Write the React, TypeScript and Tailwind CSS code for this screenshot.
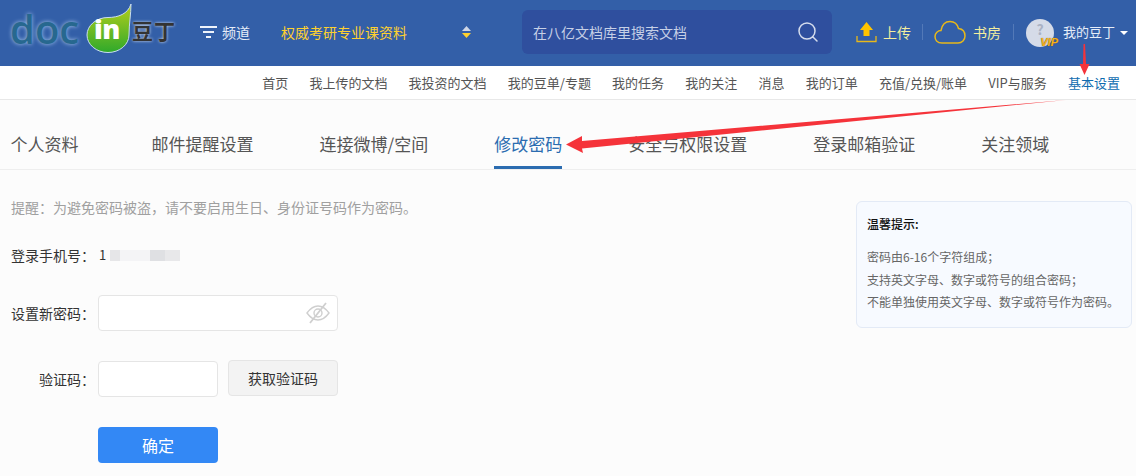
import React from 'react';
import { Search } from 'lucide-react';

const navItems = ['首页', '我上传的文档', '我投资的文档', '我的豆单/专题', '我的任务', '我的关注', '消息', '我的订单', '充值/兑换/账单', 'VIP与服务'];
const tabs = ['邮件提醒设置', '连接微博/空间', '修改密码', '安全与权限设置', '登录邮箱验证', '关注领域'];

const Logo = () => (
    <div className="relative ml-[10px] flex h-[66px] w-[170px] shrink-0 items-center">
        <span className="mt-[-6px] font-['Open_Sans',sans-serif] text-[40px] leading-none font-semibold text-[#27688f] [text-shadow:0_0_4px_#a8c8ec]">doc</span>
        {/* green drop */}
        <svg className="absolute top-[3px] left-[74px]" width="50" height="52" viewBox="0 0 50 52">
            <defs>
                <linearGradient id="drop" x1="0" y1="0" x2="0" y2="1">
                    <stop offset="0" stopColor="#b7cf1c" />
                    <stop offset="1" stopColor="#2fa92b" />
                </linearGradient>
            </defs>
            <path d="M47 2 C47 12 45 22 45 33 A21 17.500 0 1 1 24 15.500 C34 15.500 44 12 47 2 Z" fill="url(#drop)" stroke="#c9dcf2" strokeWidth="1" />
        </svg>
        <span className="absolute top-[13px] left-[84px] font-['Open_Sans',sans-serif] text-[27px] leading-[34px] font-extrabold tracking-[-0.5px] text-white">in</span>
        <span className="absolute top-[17px] left-[122px] font-['Noto_Sans_CJK_SC',sans-serif] text-[21px] leading-[28px] font-bold tracking-[1px] text-[#333] [text-shadow:0_0_3px_#dfe8f5]">豆丁</span>
    </div>
);

const Header = () => (
    <header className="flex h-[66px] items-center bg-[#335fa8] pb-[2px] text-sm">
        <Logo />
        {/* channel */}
        <div className="ml-[20px] flex w-[81px] items-center text-[#e6edf8]">
            <svg width="17" height="14" viewBox="0 0 17 14" className="mr-[5px] shrink-0" fill="#eef3fb">
                <rect x="0" y="1" width="17" height="2" />
                <rect x="3" y="6" width="11" height="2" />
                <rect x="6" y="11" width="5" height="2" />
            </svg>
            频道
        </div>
        <span className="w-[181px] text-[#ffd12e]">权威考研专业课资料</span>
        <svg width="9" height="12" viewBox="0 0 9 12" className="shrink-0">
            <path d="M4.500 0 L9 5 H0 Z" fill="#cfd6e6" />
            <path d="M0 7 H9 L4.500 12 Z" fill="#ffd12e" />
        </svg>
        {/* search */}
        <div className="ml-[51px] flex h-[44px] w-[310px] items-center justify-between rounded-md bg-[#2f4f9e] pr-[12px] pl-[11px] text-[#c6d0e6]">
            <span>在八亿文档库里搜索文档</span>
            <Search size={24} strokeWidth={1.5} className="text-[#d5dded]" />
        </div>
        <div className="ml-[24px] flex items-center text-[#f4ee9e]">
            <svg width="21" height="22" viewBox="0 0 21 22" className="mr-[6px] shrink-0">
                <path d="M10.500 1 L17 9 H13.500 V15 H7.500 V9 H4 Z" fill="#ffc400" />
                <path d="M1 15 V20.500 H20 V15" fill="none" stroke="#e8b81a" strokeWidth="1.300" />
            </svg>
            上传
            <div className="mx-[11px] h-[16px] w-px bg-[#5379b8]" />
            <svg width="32" height="24" viewBox="0 0 32 24" className="mr-[7px] shrink-0">
                <path d="M8 23 C3 23 1 19.500 1 16.500 C1 13 4 10.500 7 10.500 C8 5 11.500 1.500 16 1.500 C20.500 1.500 23.500 4.500 24.500 8.500 C28.500 9 31 12 31 16 C31 20 28 23 24 23 Z" fill="none" stroke="#e8b81a" strokeWidth="1.500" />
            </svg>
            书房
            <div className="mx-[12px] h-[16px] w-px bg-[#5379b8]" />
        </div>
        <div className="relative mt-[2px] h-[28px] w-[28px] shrink-0 rounded-full bg-[#d5dbe8] pt-[3px] text-center text-[14px] leading-[14px] font-bold text-[#aab2c4]">
            ?
            <span className="absolute right-[-4px] bottom-[-1px] font-['Liberation_Sans',sans-serif] text-[11px] leading-[11px] font-bold text-[#f5b21c] italic [text-shadow:0_0_1px_#7a4a00]">VIP</span>
        </div>
        <span className="ml-[9px] text-[13px] text-[#e6edf8]">我的豆丁</span>
        <span className="mt-[2px] ml-[5px] h-0 w-0 border-x-[4px] border-t-[4px] border-x-transparent border-t-white" />
    </header>
);

const SubNav = () => (
    <nav className="relative flex h-[34px] items-center justify-end gap-[21.200px] border-b border-[#e8e8e8] bg-white pr-[16px] text-[13px] text-[#555]">
        {navItems.map(item => (
            <a key={item}>{item}</a>
        ))}
        <a className="text-[#0f6cb0]">基本设置</a>
    </nav>
);

const Tabs = () => (
    <div className="flex h-[70px] border-b border-[#eeeeee] pl-[10.500px] text-[17px] text-[#555]">
        <a className="mr-[73px] flex h-[69px] items-center pt-[18px]">个人资料</a>
        <div className="flex gap-[66px]">
            {tabs.map(tab =>
                tab === '修改密码' ? (
                    <a key={tab} className="flex h-[69px] items-center border-b-[3px] border-[#2b6cb0] pt-[21px] text-[#2b6cb0]">{tab}</a>
                ) : (
                    <a key={tab} className="flex h-[69px] items-center pt-[18px]">{tab}</a>
                )
            )}
        </div>
    </div>
);

const Label = ({ children }: { children: React.ReactNode }) => (
    <label className="mr-[3px] w-[84px] shrink-0 text-right text-sm whitespace-nowrap text-[#333]">{children}</label>
);

const Form = () => (
    <div className="pl-[11px] text-sm">
        <p className="mt-[27px] h-5 leading-5 text-[#a0a0a0]">提醒：为避免密码被盗，请不要启用生日、身份证号码作为密码。</p>
        <div className="mt-[28px] flex h-5 items-center">
            <span className="mr-[4px] text-[#333]">登录手机号：</span>
            <span className="text-[13px] text-[#333]">1</span>
            {/* blurred number */}
            <div className="ml-[4px] flex h-[11px] items-stretch">
                <span className="w-[10px] bg-[#e6e6e8]" />
                <span className="w-[30px] bg-[#f4f4f6]" />
                <span className="w-[15px] bg-[#dfe0e3]" />
                <span className="w-[15px] bg-[#e8e8ea]" />
            </div>
        </div>
        <div className="mt-[30px] flex items-center">
            <Label>设置新密码：</Label>
            <div className="flex h-[36px] w-[240px] items-center justify-end rounded-[4px] border border-[#e5e5e5] bg-white pr-[7px]">
                <svg width="24" height="22" viewBox="0 0 24 22" fill="none" stroke="#cfcfcf" strokeWidth="1.400">
                    <path d="M1 11 C5 5.500 9 4 12 4 C15 4 19 5.500 23 11 C19 16.500 15 18 12 18 C9 18 5 16.500 1 11 Z" />
                    <circle cx="12" cy="11" r="4" />
                    <path d="M20 1 L4 21" strokeWidth="1.800" />
                </svg>
            </div>
        </div>
        <div className="mt-[30px] flex items-start">
            <Label><span className="leading-[36px]">验证码：</span></Label>
            <div className="h-[36px] w-[120px] rounded-[4px] border border-[#e5e5e5] bg-white" />
            <button className="mt-[-1px] ml-[10px] h-[36px] w-[110px] rounded-[4px] border border-[#e5e5e5] bg-[#f3f3f3] text-[#333]">获取验证码</button>
        </div>
        <button className="mt-[30px] ml-[87px] block h-[36px] w-[120px] rounded-[4px] bg-[#3388f5] text-base text-white">确定</button>
    </div>
);

const Tips = () => (
    <div className="mt-[31px] mr-[4px] h-[127px] w-[276px] rounded-md border border-[#e3eaf6] bg-[#f7faff] px-[10px] pt-[14px] text-xs">
        <h4 className="font-medium text-[#111]">温馨提示:</h4>
        <div className="mt-[14px] leading-[22.500px] text-[#666]">
            <p>密码由6-16个字符组成；</p>
            <p>支持英文字母、数字或符号的组合密码；</p>
            <p>不能单独使用英文字母、数字或符号作为密码。</p>
        </div>
    </div>
);

export default function App() {
    return (
        <div className="relative h-[476px] w-[1136px] overflow-hidden bg-[#fcfcfc] font-['Noto_Sans_CJK_SC','Liberation_Sans',sans-serif]">
            <Header />
            <SubNav />
            <Tabs />
            <div className="flex justify-between">
                <Form />
                <Tips />
            </div>
            {/* red annotation arrows */}
            <svg className="pointer-events-none absolute top-0 left-0" width="1136" height="476" viewBox="0 0 1136 476">
                <path d="M1083.500 44 L1085 44 L1086 64 L1089.500 64 L1084.500 75 L1079.500 64 L1083 64 Z" fill="#f5333a" />
                <path d="M1066 100 L582 148.500 L583 153 L566 144.500 L582 136 L582 141 Z" fill="#f5333a" />
            </svg>
        </div>
    );
}
